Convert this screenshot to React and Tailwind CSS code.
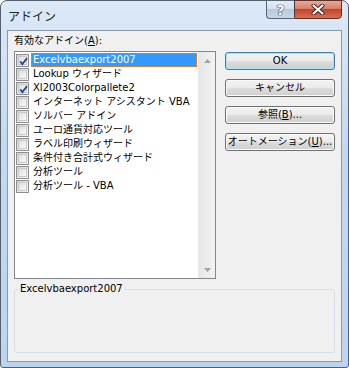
import React from "react";

const items = [
  { label: "Excelvbaexport2007", checked: true, selected: true },
  { label: "Lookup ウィザード" },
  { label: "Xl2003Colorpallete2", checked: true },
  { label: "インターネット アシスタント VBA" },
  { label: "ソルバー アドイン" },
  { label: "ユーロ通貨対応ツール" },
  { label: "ラベル印刷ウィザード" },
  { label: "条件付き合計式ウィザード" },
  { label: "分析ツール" },
  { label: "分析ツール - VBA" },
];

const font = "font-['DejaVu_Sans','Noto_Sans_CJK_JP',sans-serif]";

function CheckBox({ checked }) {
  return (
    <span className="block w-[13px] h-[13px] shrink-0 border border-[#8e8f8f] bg-[linear-gradient(135deg,#d2d2d2,#f7f7f7)] p-[1px]">
      <span className="block w-full h-full border border-[#c9c9c9] bg-[linear-gradient(135deg,#dedede,#fbfbfb)]">
        {checked && (
          <svg width="9" height="9" viewBox="0 0 9 9" className="block">
            <path d="M1.2 4.4 L3.4 7.2 L8 1.2" fill="none" stroke="#2f4d8a" strokeWidth="1.9" />
          </svg>
        )}
      </span>
    </span>
  );
}

function Button({ children, primary }) {
  return (
    <button
      className={`h-[18px] w-full rounded-[3px] border px-0 text-[10px] leading-none whitespace-nowrap text-black bg-[linear-gradient(#f2f2f2,#ebebeb_50%,#dddddd_50%,#cfcfcf)] ${
        primary
          ? "border-[#3c7fb1] shadow-[inset_0_0_0_1px_#a6e3f9]"
          : "border-[#707070] shadow-[inset_0_0_0_1px_#fbfbfb]"
      }`}
    >
      {children}
    </button>
  );
}

export default function App() {
  return (
    <div className={`w-[349px] h-[368px] ${font} text-black`}>
      <div className="w-full h-full flex flex-col rounded-t-[7px] rounded-b-[3px] border border-[#55606e] bg-[linear-gradient(180deg,#dce9f7,#c3d9f0_40%,#bcd4ee)] px-[6px] pb-[5px]">
        {/* title bar */}
        <div className="h-[29px] flex justify-between items-start shrink-0">
          <span className="pl-[1px] pt-[7px] text-[12px] leading-[15px] text-[#1e1e1e] font-['Noto_Sans_CJK_JP',sans-serif]">アドイン</span>
          <div className="flex -mt-[1px]">
            <div className="w-[28px] h-[19px] flex items-center justify-center rounded-bl-[4px] border border-r-0 border-[#5a6573] bg-[linear-gradient(#e4edf7,#d4e1ef_45%,#b8cadf_50%,#c6d6e8)]">
              <span className="text-[14px] font-bold leading-none text-white [text-shadow:0_0_1px_#2c3a4c,0_0_1px_#2c3a4c,0_0_1px_#2c3a4c]">?</span>
            </div>
            <div className="w-[48px] h-[19px] flex items-center justify-center rounded-br-[4px] border border-[#5a3228] bg-[linear-gradient(#e9a99a,#d78069_45%,#c4432a_50%,#d7705a)]">
              <svg width="14" height="11" viewBox="0 0 14 11">
                <path d="M2.5 1.5 L11.5 9.5 M11.5 1.5 L2.5 9.5" stroke="#3a1d17" strokeWidth="4" strokeLinecap="round" />
                <path d="M2.5 1.5 L11.5 9.5 M11.5 1.5 L2.5 9.5" stroke="#ffffff" strokeWidth="2.2" strokeLinecap="round" />
              </svg>
            </div>
          </div>
        </div>

        {/* client area */}
        <div className="flex-1 border border-[#8c9bab] bg-[#f0f0f0] pl-[6px] pt-[3px] flex flex-col">
          <div className="text-[10px] leading-[14px] h-[14px]">
            有効なアドイン(<u>A</u>):
          </div>
          <div className="flex mt-[3px] gap-[9px]">
            {/* list box */}
            <div className="w-[202px] h-[228px] shrink-0 border border-[#828790] bg-white flex">
              <div className="flex-1 min-w-0 overflow-hidden pt-[1px] pr-[1px]">
                {items.map((it) => (
                  <div key={it.label} className="h-[14px] flex items-center">
                    <span className="ml-[1px] flex">
                      <CheckBox checked={it.checked} />
                    </span>
                    <span
                      className={`ml-[2px] h-[14px] px-[1px] text-[10px] leading-[12px] whitespace-nowrap ${
                        it.selected
                          ? "flex-1 bg-[#3399ff] text-white border border-dotted border-[#d98a3a]"
                          : "border border-transparent"
                      }`}
                    >
                      {it.label}
                    </span>
                  </div>
                ))}
              </div>
              <div className="w-[17px] shrink-0 flex flex-col justify-between border-l border-[#e8e8e8] bg-[linear-gradient(90deg,#e6e6e6,#f3f3f3)]">
                <div className="h-[17px] flex items-center justify-center">
                  <svg width="7" height="4" viewBox="0 0 7 4">
                    <path d="M0 4 L3.5 0 L7 4 Z" fill="#a3a3a3" />
                  </svg>
                </div>
                <div className="h-[17px] flex items-center justify-center">
                  <svg width="7" height="4" viewBox="0 0 7 4">
                    <path d="M0 0 L7 0 L3.5 4 Z" fill="#a3a3a3" />
                  </svg>
                </div>
              </div>
            </div>

            {/* buttons */}
            <div className="w-[110px] shrink-0 pt-[1px] flex flex-col gap-[9px]">
              <Button primary>OK</Button>
              <Button>キャンセル</Button>
              <Button>
                参照(<u>B</u>)...
              </Button>
              <Button>
                オートメーション(<u>U</u>)...
              </Button>
            </div>
          </div>

          {/* description group */}
          <fieldset className="mt-[3px] w-[321px] h-[71px] rounded-[3px] border border-[#d5dfe5]">
            <legend className="ml-[4px] px-[1px] text-[10px] leading-[14px]">Excelvbaexport2007</legend>
          </fieldset>
        </div>
      </div>
    </div>
  );
}
